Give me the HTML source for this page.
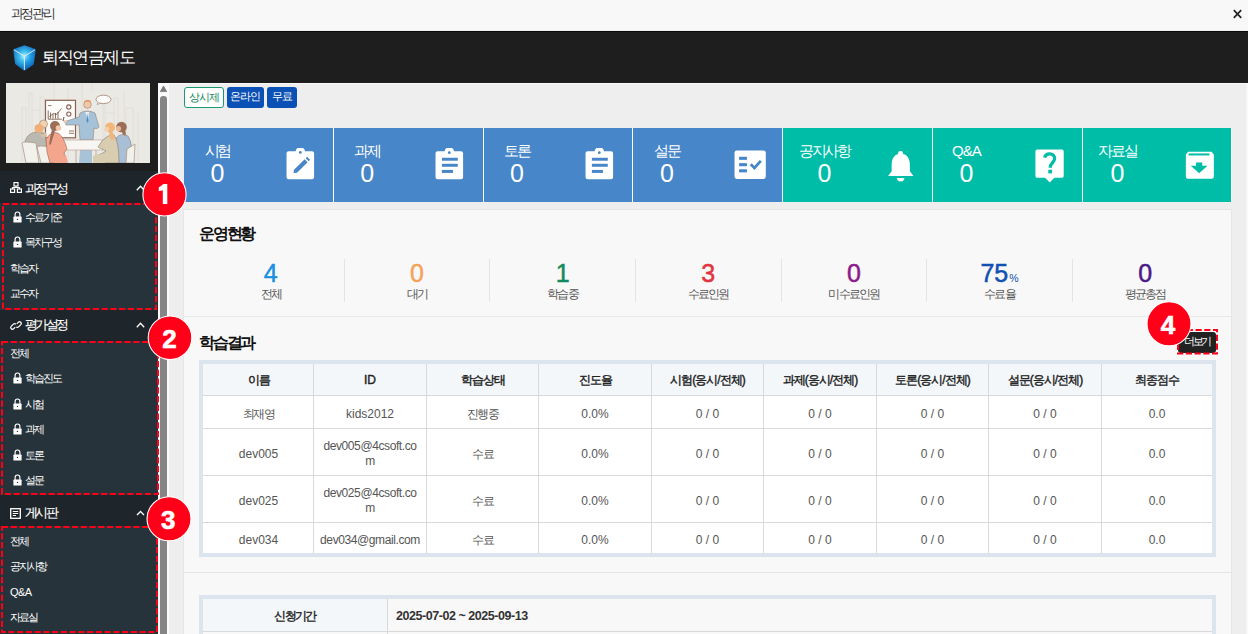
<!DOCTYPE html>
<html><head><meta charset="utf-8">
<style>
*{box-sizing:border-box;margin:0;padding:0}
html,body{width:1248px;height:634px;overflow:hidden}
body{position:relative;background:#eeeeee;font-family:"Liberation Sans",sans-serif;color:#333}
.a{position:absolute}
#title{left:0;top:0;width:1248px;height:30px;background:#f8f8f8}
#title .t{left:10.5px;top:0;font-size:13px;line-height:27px;color:#333;letter-spacing:-2.2px}
#header{left:0;top:31px;width:1248px;height:52px;background:#1e1e1e;border-top:1px solid #0a0a0a}
#imgwrap{left:0;top:83px;width:158px;height:88px;background:#1e1e1e}
#side{left:0;top:171px;width:158px;height:463px;background:#1f262b}
#sbar{left:158px;top:83px;width:11px;height:551px;background:#fbfbfb}
#main{left:169px;top:84px;width:1077px;height:550px;background:#eeeeee}
#rstrip{left:1246px;top:83px;width:2px;height:551px;background:#f8f8f8}
.badge{top:87px;height:21px;border-radius:3px;font-size:11px;line-height:19px;text-align:center;letter-spacing:-0.8px}
.card{top:128px;height:74px;color:#fff}
.card .lb{position:absolute;top:13px;font-size:15px;line-height:20px;text-align:center;min-width:36px;letter-spacing:-1px}
.card .nm{position:absolute;top:33px;font-size:24px;line-height:30px;text-align:center;width:100%}
.card svg{position:absolute}
#panel{left:183px;top:209px;width:1049px;height:440px;background:#f8f8f8;border:1px solid #e6e6e6}

.sh{position:absolute;left:0;width:158px;background:#1f262b;color:#fff}
.sh span{position:absolute;left:24.8px;top:1.5px;line-height:32px;font-size:13px;letter-spacing:-2.6px;-webkit-text-stroke:0.15px #fff}
.sh .ic{position:absolute;left:10px;top:11px}
.sh .ct{position:absolute;left:136px;top:13.5px}
.sm{position:absolute;left:0;width:158px;background:#27333a}
.it{position:absolute;left:10px;height:20px;width:140px;color:#fff}
.it span{position:absolute;left:0;top:0;line-height:20px;font-size:11px;letter-spacing:-2.1px;white-space:nowrap}
.it .lk{position:absolute;left:2.5px;top:4px}

.icw{transform:scale(1.06);transform-origin:50% 50%}
.cw{position:absolute;left:15.5px;top:0;min-width:36px;text-align:center}
.card .lb{position:relative;top:13px;font-size:15px;line-height:20px;letter-spacing:-2.1px;white-space:nowrap;min-width:0}
.card .nm{position:absolute;left:0;top:30px;font-size:25px;line-height:30px;width:100%;text-align:center}

.sec-t{font-size:16px;line-height:20px;font-weight:bold;color:#111;letter-spacing:-2.2px}
.st{top:259px;height:43px;text-align:center}
.sn{position:absolute;left:0;width:100%;top:0;font-size:25px;line-height:28px;-webkit-text-stroke:0.5px currentColor}
.sl{position:absolute;left:0;width:100%;top:27px;font-size:12px;line-height:17px;color:#555;letter-spacing:-1.8px}

.hl{left:203px;width:1009px;height:1px;background:#d9d9d9}
.vl{top:364px;width:1px;height:189px;background:#d9d9d9}
.th{display:flex;align-items:center;justify-content:center;padding-top:1.5px;font-size:12px;color:#222;-webkit-text-stroke:0.4px #222;letter-spacing:-1px;white-space:nowrap}
.td{display:flex;align-items:center;justify-content:center;font-size:12px;color:#555;text-align:center;line-height:15px;white-space:nowrap}
.td div{position:relative;top:2px}
.td .em{letter-spacing:-0.4px}
.td .k{letter-spacing:-1.5px}
</style></head><body>
<div id="title" class="a"><div class="t a">과정관리</div>
<svg class="a" style="left:1232px;top:9px" width="11" height="10" viewBox="0 0 11 10"><path d="M1.8,1.2 L9.2,8.8 M9.2,1.2 L1.8,8.8" stroke="#222" stroke-width="1.7"/></svg></div>
<div id="header" class="a">
<svg class="a" style="left:12px;top:12px" width="26" height="30" viewBox="0 0 26 30">
<defs>
<radialGradient id="cg" cx="12.4" cy="12.3" r="14" gradientUnits="userSpaceOnUse"><stop offset="0" stop-color="#b8f0ff"/><stop offset="0.35" stop-color="#3fc0f0"/><stop offset="1" stop-color="#0a5fb5"/></radialGradient>
<radialGradient id="cg2" cx="12.4" cy="12.3" r="15" gradientUnits="userSpaceOnUse"><stop offset="0" stop-color="#8ee4ff"/><stop offset="0.4" stop-color="#1fa0e6"/><stop offset="1" stop-color="#0850a5"/></radialGradient>
</defs>
<polygon points="12.5,1.2 23.9,5.3 12.4,12.3 1.1,5.3" fill="url(#cg)"/>
<polygon points="1.1,5.3 12.4,12.3 12.4,27 3.2,20" fill="url(#cg)"/>
<polygon points="23.9,5.3 12.4,12.3 12.4,27 21.7,20.6" fill="url(#cg2)"/>
<path d="M2,5.8 L12.4,12.3 L23,5.8 M12.4,12.3 V26" stroke="#ffffff" stroke-width="1" fill="none" opacity="0.85"/>
</svg>
<div class="a" style="left:41.5px;top:8.5px;font-size:17px;line-height:34px;color:#fff;letter-spacing:-1.6px">퇴직연금제도</div>
</div>
<div id="imgwrap" class="a"></div>
<svg class="a" style="left:6px;top:83px" width="144" height="80" viewBox="0 0 144 80">
<rect width="144" height="80" fill="#ebe9e4"/>
<g fill="none" stroke="#dedbd5" stroke-width="0.8">
<path d="M16,80 V24 H20 V80 M23,80 V10 H26 V80 M34,80 V14 H38 V80 M48,0 V17 M62,80 V5 M76,30 V0 M86,8 V0 M97,80 V12 H99 V80 M108,80 V15 H112 V80 M118,80 V8 M120,80 V25 H127 V80 M132,80 V30"/>
<path d="M26,27 H34 M99,30 H108"/>
</g>
<rect x="39.5" y="17.3" width="30" height="37.5" fill="#fdfcfa" stroke="#8a6252" stroke-width="1.2"/>
<path d="M42,22.6 H45.5 M63,48 H68 M63,50.3 H68" stroke="#8b6b5b" stroke-width="0.9"/>
<path d="M42.2,27.5 V36.2 H55.8 M44.5,35.5 V29.5 M47,35.5 V31 M49.5,35.5 V30 M52,35.5 V29 M43.5,33.5 L47.5,30.5 L50.5,31.5 L55.5,25.5" stroke="#6d4d3d" stroke-width="0.8" fill="none"/>
<circle cx="62.8" cy="24" r="2.1" fill="none" stroke="#8a6252" stroke-width="1.1"/>
<circle cx="62.8" cy="31.1" r="2.1" fill="none" stroke="#8a6252" stroke-width="1.1"/>
<ellipse cx="97.5" cy="16.4" rx="7.5" ry="4.2" fill="#fdfcfa" stroke="#a08070" stroke-width="0.8"/>
<path d="M92.5,19 L91,21.5 L95,20" fill="#fdfcfa" stroke="#a08070" stroke-width="0.6"/>
<!-- speaker -->
<path d="M73,80 L75,56 H86 L86,80 Z" fill="#a8c3d8"/>
<path d="M74,30 Q81,26 89,30 L93,44 Q91,47 88,45 L87,57 H74 L73,42 L60,42 L59,38.5 L73,34 Z" fill="#a6c2d9" stroke="#8a7060" stroke-width="0.5"/>
<path d="M79.5,29 L81.5,40 L83,29 Z" fill="#f4f2ee"/>
<path d="M81,30 L80.5,38 L81.8,40 L82.5,38 Z" fill="#3c8fc0"/>
<circle cx="81.5" cy="21.5" r="3.8" fill="#f2c9a8" stroke="#8a6a5a" stroke-width="0.5"/>
<path d="M77.8,20 Q78,16.8 81.5,16.8 Q85.2,16.8 85.2,20 Q83,18.5 81.5,19 Q79.5,18.3 77.8,20 Z" fill="#e2a070"/>
<circle cx="59" cy="38.6" r="1.6" fill="#f2c9a8"/>
<path d="M58,34 L57,38" stroke="#5a4030" stroke-width="0.9"/>
<!-- table -->
<path d="M55,57 H97 V67 H55 Z" fill="#f7f6f3" stroke="#b8a090" stroke-width="0.6"/>
<path d="M58,67 V80 M90,67 V80 M70,67 V80" stroke="#b8a090" stroke-width="0.8"/>
<!-- grey man -->
<circle cx="37.5" cy="41" r="4" fill="#f0d2b0" stroke="#8a6a5a" stroke-width="0.5"/>
<path d="M19,58 Q22,50 30,49 L38,50 Q41,54 40,66 L20,67 Z" fill="#b9b9b2" stroke="#7a6a60" stroke-width="0.5"/>
<circle cx="33" cy="45.5" r="4.6" fill="#eeaf78"/>
<path d="M34,52 Q38,52 40,49 L41,53 L37,55 Z" fill="#dfc0a0"/>
<!-- chairs -->
<path d="M16,60 Q17,58 30,60 L33,80 H20 Z" fill="#f3f1ec" stroke="#a89080" stroke-width="0.7"/>
<path d="M31,64 Q34,62 43,64 L46,80 H35 Z" fill="#f3f1ec" stroke="#a89080" stroke-width="0.7"/>
<!-- pink woman -->
<path d="M40,56 Q45,48 52,50 Q58,54 61,66 L58,70 L60,80 H44 Q40,70 40,56 Z" fill="#f3a68c" stroke="#8a5a4a" stroke-width="0.5"/>
<path d="M48,80 Q50,72 60,72 L62,80 Z" fill="#f3a68c"/>
<circle cx="49" cy="43" r="5" fill="#9b6e58"/>
<path d="M46,46 Q44,54 43,62 L45,61 Q47,54 49,48 Z" fill="#9b6e58"/>
<circle cx="52.5" cy="45" r="2.8" fill="#f2c9a8"/>
<!-- blue woman -->
<path d="M110,55 Q116,49 122,53 Q127,60 126,80 H112 Q108,68 110,55 Z" fill="#a9bfd6" stroke="#7a6a60" stroke-width="0.5"/>
<circle cx="115.5" cy="44" r="5.3" fill="#9b6e58"/>
<path d="M118,45 Q121,50 119,53 L116,50 Z" fill="#9b6e58"/>
<circle cx="112.5" cy="45.5" r="2.6" fill="#e8b898"/>
<!-- chair right -->
<path d="M121,66 L129,61 L128,80 H120 Z" fill="#f3f1ec" stroke="#a89080" stroke-width="0.7"/>
<!-- beige woman -->
<path d="M92,64 Q96,56 102,53 L108,52 Q113,58 113,80 H94 L92,72 Q98,70 100,68 Z" fill="#d8cdb0" stroke="#7a6a60" stroke-width="0.5"/>
<path d="M87,73 Q90,71 97,71 L99,80 H87 Z" fill="#d8cdb0"/>
<circle cx="104" cy="44.5" r="5" fill="#f3b67a"/>
<path d="M104,46 Q109,50 108,57 L105,57 L103,50 Z" fill="#f3b67a"/>
<circle cx="100.8" cy="46.2" r="2.4" fill="#f2d0b0"/>
</svg>
<div id="side" class="a">
<div class="sh" style="top:0px;height:32px"><svg class="ic" width="12" height="11" viewBox="0 0 12 11"><rect x="4" y="0.6" width="4" height="3.4" fill="none" stroke="#fff" stroke-width="1.2"/><rect x="0.6" y="7" width="4" height="3.4" fill="none" stroke="#fff" stroke-width="1.2"/><rect x="7.4" y="7" width="4" height="3.4" fill="none" stroke="#fff" stroke-width="1.2"/><path d="M6,4 V5.5 M2.6,7 V5.5 H9.4 V7" stroke="#fff" stroke-width="1.1" fill="none"/></svg><span>과정구성</span><svg class="ct" width="9" height="6" viewBox="0 0 9 6"><path d="M0.8,5.2 L4.5,1.2 L8.2,5.2" stroke="#fff" stroke-width="1.3" fill="none"/></svg></div>
<div class="sm" style="top:32px;height:107px">
</div>
<div class="sh" style="top:139px;height:31px"><svg class="ic" style="top:9.5px" width="12" height="11" viewBox="0 0 12 11"><path d="M5.2,7.2 L3.6,8.8 A1.7,1.7 0 0 1 1.2,6.4 L3.4,4.2 A1.7,1.7 0 0 1 5.8,4.2 M6.8,3.8 L8.4,2.2 A1.7,1.7 0 0 1 10.8,4.6 L8.6,6.8 A1.7,1.7 0 0 1 6.2,6.8" stroke="#fff" stroke-width="1.2" fill="none"/></svg><span style="top:-1px">평가설정</span><svg class="ct" style="top:11.5px" width="9" height="6" viewBox="0 0 9 6"><path d="M0.8,5.2 L4.5,1.2 L8.2,5.2" stroke="#fff" stroke-width="1.3" fill="none"/></svg></div>
<div class="sm" style="top:170px;height:154px"></div>
<div class="sh" style="top:324px;height:31px"><svg class="ic" style="top:12.5px" width="11" height="11" viewBox="0 0 11 11"><rect x="0.7" y="0.7" width="9.6" height="9.6" fill="none" stroke="#fff" stroke-width="1.3"/><path d="M2.8,3.5 H8.2 M2.8,5.5 H8.2 M2.8,7.5 H6" stroke="#fff" stroke-width="1.1"/></svg><span style="top:2px">게시판</span><svg class="ct" style="top:15px" width="9" height="6" viewBox="0 0 9 6"><path d="M1,5 L4.5,1.5 L8,5" stroke="#fff" stroke-width="1.3" fill="none"/></svg></div>
<div class="sm" style="top:355px;height:108px"></div>
<div class="it" style="top:35.7px"><svg class="lk" width="9" height="12" viewBox="0 0 9 12"><path d="M2.1,6 V3.4 A2.4,2.4 0 0 1 6.9,3.4 V6" stroke="#fff" stroke-width="1.15" fill="none"/><rect x="0.4" y="5.6" width="8.2" height="6" rx="0.7" fill="#fff"/><circle cx="4.5" cy="8.4" r="0.7" fill="#27333a"/></svg><span style="left:15px">수료기준</span></div>
<div class="it" style="top:61.1px"><svg class="lk" width="9" height="12" viewBox="0 0 9 12"><path d="M2.1,6 V3.4 A2.4,2.4 0 0 1 6.9,3.4 V6" stroke="#fff" stroke-width="1.15" fill="none"/><rect x="0.4" y="5.6" width="8.2" height="6" rx="0.7" fill="#fff"/><circle cx="4.5" cy="8.4" r="0.7" fill="#27333a"/></svg><span style="left:15px">목차구성</span></div>
<div class="it" style="top:86.6px"><span>학습자</span></div>
<div class="it" style="top:112.0px"><span>교수자</span></div>
<div class="it" style="top:171.8px"><span>전체</span></div>
<div class="it" style="top:197.2px"><svg class="lk" width="9" height="12" viewBox="0 0 9 12"><path d="M2.1,6 V3.4 A2.4,2.4 0 0 1 6.9,3.4 V6" stroke="#fff" stroke-width="1.15" fill="none"/><rect x="0.4" y="5.6" width="8.2" height="6" rx="0.7" fill="#fff"/><circle cx="4.5" cy="8.4" r="0.7" fill="#27333a"/></svg><span style="left:15px">학습진도</span></div>
<div class="it" style="top:222.7px"><svg class="lk" width="9" height="12" viewBox="0 0 9 12"><path d="M2.1,6 V3.4 A2.4,2.4 0 0 1 6.9,3.4 V6" stroke="#fff" stroke-width="1.15" fill="none"/><rect x="0.4" y="5.6" width="8.2" height="6" rx="0.7" fill="#fff"/><circle cx="4.5" cy="8.4" r="0.7" fill="#27333a"/></svg><span style="left:15px">시험</span></div>
<div class="it" style="top:248.1px"><svg class="lk" width="9" height="12" viewBox="0 0 9 12"><path d="M2.1,6 V3.4 A2.4,2.4 0 0 1 6.9,3.4 V6" stroke="#fff" stroke-width="1.15" fill="none"/><rect x="0.4" y="5.6" width="8.2" height="6" rx="0.7" fill="#fff"/><circle cx="4.5" cy="8.4" r="0.7" fill="#27333a"/></svg><span style="left:15px">과제</span></div>
<div class="it" style="top:273.6px"><svg class="lk" width="9" height="12" viewBox="0 0 9 12"><path d="M2.1,6 V3.4 A2.4,2.4 0 0 1 6.9,3.4 V6" stroke="#fff" stroke-width="1.15" fill="none"/><rect x="0.4" y="5.6" width="8.2" height="6" rx="0.7" fill="#fff"/><circle cx="4.5" cy="8.4" r="0.7" fill="#27333a"/></svg><span style="left:15px">토론</span></div>
<div class="it" style="top:299.1px"><svg class="lk" width="9" height="12" viewBox="0 0 9 12"><path d="M2.1,6 V3.4 A2.4,2.4 0 0 1 6.9,3.4 V6" stroke="#fff" stroke-width="1.15" fill="none"/><rect x="0.4" y="5.6" width="8.2" height="6" rx="0.7" fill="#fff"/><circle cx="4.5" cy="8.4" r="0.7" fill="#27333a"/></svg><span style="left:15px">설문</span></div>
<div class="it" style="top:359.6px"><span>전체</span></div>
<div class="it" style="top:385.1px"><span>공지사항</span></div>
<div class="it" style="top:410.5px"><span style="letter-spacing:-0.6px">Q&amp;A</span></div>
<div class="it" style="top:436.0px"><span>자료실</span></div>
</div>
<div id="sbar" class="a">
<svg class="a" style="left:0;top:0" width="11" height="14" viewBox="0 0 11 14"><path d="M2.3,8.6 L5.5,3 L8.7,8.6 Z" fill="#7a7a7a" stroke="#7a7a7a" stroke-width="0.8" stroke-linejoin="round"/></svg>
<div class="a" style="left:2px;top:13px;width:6.5px;height:560px;background:#858585;border-radius:3.2px 3.2px 0 0"></div>
</div>
<div id="main" class="a"></div>
<div id="rstrip" class="a"></div>
<div class="a" style="left:158px;top:83px;width:1090px;height:1px;background:#fafafa"></div>
<div class="badge a" style="left:184px;width:40px;background:#fff;border:1px solid #1a9a6e;color:#11875c">상시제</div>
<div class="badge a" style="left:226.5px;width:37.5px;background:#0b50b4;color:#fff">온라인</div>
<div class="badge a" style="left:267px;width:30px;background:#0b50b4;color:#fff">무료</div>
<div class="a" style="left:184px;top:128px;width:1047.5px;height:74px;background:#fff"></div>
<div class="card a" style="left:184.00px;width:148.79px;background:#4786c9"><div class="cw"><div class="lb">시험</div><div class="nm">0</div></div><div class="icw" style="position:absolute;left:102.0px;top:19.5px"><svg width="28" height="31" viewBox="0 0 28 31"><path d="M2.5,3 H9 A4.6,4.6 0 0 1 18,3 H24.5 A2,2 0 0 1 26.5,5 V27.5 A2,2 0 0 1 24.5,29.5 H2.5 A2,2 0 0 1 0.5,27.5 V5 A2,2 0 0 1 2.5,3 Z" fill="#fff"/><circle cx="13.5" cy="4.2" r="1.3" fill="#4786c9"/><path d="M7,23.5 L7.6,20.6 L17.6,10.6 L20.4,13.4 L10.4,23.4 Z" fill="#4786c9"/><path d="M18.6,9.6 L19.9,8.3 L22.7,11.1 L21.4,12.4 Z" fill="#4786c9"/></svg></div></div>
<div class="card a" style="left:333.79px;width:148.79px;background:#4786c9"><div class="cw"><div class="lb">과제</div><div class="nm">0</div></div><div class="icw" style="position:absolute;left:101.5px;top:19.5px"><svg width="28" height="31" viewBox="0 0 28 31"><path d="M2.5,3 H9 A4.6,4.6 0 0 1 18,3 H24.5 A2,2 0 0 1 26.5,5 V27.5 A2,2 0 0 1 24.5,29.5 H2.5 A2,2 0 0 1 0.5,27.5 V5 A2,2 0 0 1 2.5,3 Z" fill="#fff"/><circle cx="13.5" cy="4.4" r="1.3" fill="#4786c9"/><rect x="6.5" y="9.2" width="15" height="2.8" fill="#4786c9"/><rect x="6.5" y="14.9" width="15" height="2.8" fill="#4786c9"/><rect x="6.5" y="20.7" width="10.5" height="2.8" fill="#4786c9"/></svg></div></div>
<div class="card a" style="left:483.57px;width:148.79px;background:#4786c9"><div class="cw"><div class="lb">토론</div><div class="nm">0</div></div><div class="icw" style="position:absolute;left:101.5px;top:19.5px"><svg width="28" height="31" viewBox="0 0 28 31"><path d="M2.5,3 H9 A4.6,4.6 0 0 1 18,3 H24.5 A2,2 0 0 1 26.5,5 V27.5 A2,2 0 0 1 24.5,29.5 H2.5 A2,2 0 0 1 0.5,27.5 V5 A2,2 0 0 1 2.5,3 Z" fill="#fff"/><circle cx="13.5" cy="4.4" r="1.3" fill="#4786c9"/><rect x="6.5" y="9.2" width="15" height="2.8" fill="#4786c9"/><rect x="6.5" y="14.9" width="15" height="2.8" fill="#4786c9"/><rect x="6.5" y="20.7" width="10.5" height="2.8" fill="#4786c9"/></svg></div></div>
<div class="card a" style="left:633.36px;width:148.79px;background:#4786c9"><div class="cw"><div class="lb">설문</div><div class="nm">0</div></div><div class="icw" style="position:absolute;left:101.0px;top:21.5px"><svg width="31" height="28" viewBox="0 0 31 28"><rect x="0.5" y="0.5" width="29.5" height="26.8" rx="2.2" fill="#fff"/><rect x="4.8" y="6.4" width="7.4" height="2.9" fill="#4786c9"/><rect x="4.8" y="12.4" width="7.4" height="2.9" fill="#4786c9"/><rect x="4.8" y="18.2" width="7.4" height="2.9" fill="#4786c9"/><path d="M15.8,13.4 L19.3,17 L25.3,10.2" stroke="#4786c9" stroke-width="2.6" fill="none"/></svg></div></div>
<div class="card a" style="left:783.14px;width:148.79px;background:#00bda8"><div class="cw"><div class="lb">공지사항</div><div class="nm">0</div></div><div class="icw" style="position:absolute;left:104.0px;top:21.5px"><svg width="26" height="31" viewBox="0 0 26 31"><rect x="10.5" y="1" width="4.6" height="4" rx="2" fill="#fff"/><path d="M13,3.5 C19,3.5 21.6,8 21.6,14 V20 L25,24.5 H1 L4.4,20 V14 C4.4,8 7,3.5 13,3.5 Z" fill="#fff"/><path d="M9.4,26.4 H16.4 A3.5,3.2 0 0 1 9.4,26.4 Z" fill="#fff"/></svg></div></div>
<div class="card a" style="left:932.93px;width:148.79px;background:#00bda8"><div class="cw"><div class="lb" style="letter-spacing:-0.9px">Q&amp;A</div><div class="nm">0</div></div><div class="icw" style="position:absolute;left:102.5px;top:21.0px"><svg width="28" height="32" viewBox="0 0 28 32"><path d="M2.2,0.5 H25.3 A1.8,1.8 0 0 1 27.1,2.3 V25.4 A1.8,1.8 0 0 1 25.3,27.2 H18.3 L13.9,31.6 L9.5,27.2 H2.2 A1.8,1.8 0 0 1 0.4,25.4 V2.3 A1.8,1.8 0 0 1 2.2,0.5 Z" fill="#fff"/><path d="M9,8.2 A4.9,4.9 0 0 1 18.6,8.8 C18.6,12.6 14.3,13.2 14.3,17.6" stroke="#00bda8" stroke-width="3" fill="none"/><rect x="12.5" y="19.6" width="3.6" height="3.4" fill="#00bda8"/></svg></div></div>
<div class="card a" style="left:1082.71px;width:148.79px;background:#00bda8"><div class="cw"><div class="lb">자료실</div><div class="nm">0</div></div><div class="icw" style="position:absolute;left:102.5px;top:22.5px"><svg width="28" height="28" viewBox="0 0 28 28"><path d="M3,0.6 H25 L27.2,3.4 V24.2 A1.9,1.9 0 0 1 25.3,26.1 H2.7 A1.9,1.9 0 0 1 0.8,24.2 V3.4 Z" fill="#fff"/><rect x="3.4" y="2.3" width="19.6" height="1.9" fill="#00bda8"/><path d="M10.4,10.8 H16.3 V13.8 H21.3 L13.35,21 L5.4,13.8 H10.4 Z" fill="#00bda8"/></svg></div></div>
<div id="panel" class="a"></div>
<div class="a" style="left:199px;top:360px;width:1017px;height:197px;border:4px solid #dce5ee;background:#fff"></div>
<div class="a" style="left:203px;top:364px;width:1009px;height:31px;background:#f3f7fa"></div>
<div class="a hl" style="top:395px"></div>
<div class="a hl" style="top:428px"></div>
<div class="a hl" style="top:475px"></div>
<div class="a hl" style="top:522px"></div>
<div class="a vl" style="left:313px"></div>
<div class="a vl" style="left:426px"></div>
<div class="a vl" style="left:538px"></div>
<div class="a vl" style="left:651px"></div>
<div class="a vl" style="left:763px"></div>
<div class="a vl" style="left:876px"></div>
<div class="a vl" style="left:988px"></div>
<div class="a vl" style="left:1101px"></div>
<div class="a th" style="left:204px;width:109px;top:364px;height:31px">이름</div>
<div class="a th" style="left:314px;width:112px;top:364px;height:31px;letter-spacing:0">ID</div>
<div class="a th" style="left:427px;width:111px;top:364px;height:31px">학습상태</div>
<div class="a th" style="left:539px;width:112px;top:364px;height:31px">진도율</div>
<div class="a th" style="left:652px;width:111px;top:364px;height:31px">시험(응시/전체)</div>
<div class="a th" style="left:764px;width:112px;top:364px;height:31px">과제(응시/전체)</div>
<div class="a th" style="left:877px;width:111px;top:364px;height:31px">토론(응시/전체)</div>
<div class="a th" style="left:989px;width:112px;top:364px;height:31px">설문(응시/전체)</div>
<div class="a th" style="left:1102px;width:110px;top:364px;height:31px">최종점수</div>
<div class="a td" style="left:204px;width:109px;top:396px;height:32px"><div class="k">최재영</div></div>
<div class="a td" style="left:314px;width:112px;top:396px;height:32px"><div>kids2012</div></div>
<div class="a td" style="left:427px;width:111px;top:396px;height:32px"><div class="k">진행중</div></div>
<div class="a td" style="left:539px;width:112px;top:396px;height:32px"><div>0.0%</div></div>
<div class="a td" style="left:652px;width:111px;top:396px;height:32px"><div>0 / 0</div></div>
<div class="a td" style="left:764px;width:112px;top:396px;height:32px"><div>0 / 0</div></div>
<div class="a td" style="left:877px;width:111px;top:396px;height:32px"><div>0 / 0</div></div>
<div class="a td" style="left:989px;width:112px;top:396px;height:32px"><div>0 / 0</div></div>
<div class="a td" style="left:1102px;width:110px;top:396px;height:32px"><div>0.0</div></div>
<div class="a td" style="left:204px;width:109px;top:429px;height:46px"><div>dev005</div></div>
<div class="a td" style="left:314px;width:112px;top:429px;height:46px"><div class="em">dev005@4csoft.co<br>m</div></div>
<div class="a td" style="left:427px;width:111px;top:429px;height:46px"><div class="k">수료</div></div>
<div class="a td" style="left:539px;width:112px;top:429px;height:46px"><div>0.0%</div></div>
<div class="a td" style="left:652px;width:111px;top:429px;height:46px"><div>0 / 0</div></div>
<div class="a td" style="left:764px;width:112px;top:429px;height:46px"><div>0 / 0</div></div>
<div class="a td" style="left:877px;width:111px;top:429px;height:46px"><div>0 / 0</div></div>
<div class="a td" style="left:989px;width:112px;top:429px;height:46px"><div>0 / 0</div></div>
<div class="a td" style="left:1102px;width:110px;top:429px;height:46px"><div>0.0</div></div>
<div class="a td" style="left:204px;width:109px;top:476px;height:46px"><div>dev025</div></div>
<div class="a td" style="left:314px;width:112px;top:476px;height:46px"><div class="em">dev025@4csoft.co<br>m</div></div>
<div class="a td" style="left:427px;width:111px;top:476px;height:46px"><div class="k">수료</div></div>
<div class="a td" style="left:539px;width:112px;top:476px;height:46px"><div>0.0%</div></div>
<div class="a td" style="left:652px;width:111px;top:476px;height:46px"><div>0 / 0</div></div>
<div class="a td" style="left:764px;width:112px;top:476px;height:46px"><div>0 / 0</div></div>
<div class="a td" style="left:877px;width:111px;top:476px;height:46px"><div>0 / 0</div></div>
<div class="a td" style="left:989px;width:112px;top:476px;height:46px"><div>0 / 0</div></div>
<div class="a td" style="left:1102px;width:110px;top:476px;height:46px"><div>0.0</div></div>
<div class="a td" style="left:204px;width:109px;top:523px;height:30px"><div>dev034</div></div>
<div class="a td" style="left:314px;width:112px;top:523px;height:30px"><div class="em">dev034@gmail.com</div></div>
<div class="a td" style="left:427px;width:111px;top:523px;height:30px"><div class="k">수료</div></div>
<div class="a td" style="left:539px;width:112px;top:523px;height:30px"><div>0.0%</div></div>
<div class="a td" style="left:652px;width:111px;top:523px;height:30px"><div>0 / 0</div></div>
<div class="a td" style="left:764px;width:112px;top:523px;height:30px"><div>0 / 0</div></div>
<div class="a td" style="left:877px;width:111px;top:523px;height:30px"><div>0 / 0</div></div>
<div class="a td" style="left:989px;width:112px;top:523px;height:30px"><div>0 / 0</div></div>
<div class="a td" style="left:1102px;width:110px;top:523px;height:30px"><div>0.0</div></div>
<div class="a" style="left:184px;top:572px;width:1047px;height:1px;background:#e4e4e4"></div>
<div class="a" style="left:199px;top:595px;width:1017px;height:60px;border:4px solid #dce5ee;border-bottom:none;background:#f8f8f8"></div>
<div class="a" style="left:203px;top:599px;width:184px;height:32px;background:#f3f7fa"></div>
<div class="a" style="left:387px;top:599px;width:1px;height:40px;background:#d9d9d9"></div>
<div class="a" style="left:203px;top:631px;width:1009px;height:1px;background:#d9d9d9"></div>
<div class="a th" style="left:203px;top:600px;width:184px;height:32px;letter-spacing:-1.7px">신청기간</div>
<div class="a" style="left:396px;top:600px;height:32px;line-height:32px;font-size:12.5px;font-weight:bold;color:#333;letter-spacing:-0.45px">2025-07-02 ~ 2025-09-13</div>
<div class="a sec-t" style="left:199px;top:224px">운영현황</div>
<div class="st a" style="left:198.00px;width:145.64px;"><div class="sn" style="color:#1a90de">4</div><div class="sl">전체</div></div>
<div class="st a" style="left:343.64px;width:145.64px;border-left:1px solid #e4e4e4;"><div class="sn" style="color:#f5a35c">0</div><div class="sl">대기</div></div>
<div class="st a" style="left:489.29px;width:145.64px;border-left:1px solid #e4e4e4;"><div class="sn" style="color:#138a5e">1</div><div class="sl">학습중</div></div>
<div class="st a" style="left:634.93px;width:145.64px;border-left:1px solid #e4e4e4;"><div class="sn" style="color:#e0353f">3</div><div class="sl">수료인원</div></div>
<div class="st a" style="left:780.57px;width:145.64px;border-left:1px solid #e4e4e4;"><div class="sn" style="color:#8d1a8a">0</div><div class="sl">미수료인원</div></div>
<div class="st a" style="left:926.21px;width:145.64px;border-left:1px solid #e4e4e4;"><div class="sn" style="color:#1050b0">75<span style="font-size:10.5px;-webkit-text-stroke:0;margin-left:1px;position:relative;top:0px">%</span></div><div class="sl">수료율</div></div>
<div class="st a" style="left:1071.86px;width:145.64px;border-left:1px solid #e4e4e4;"><div class="sn" style="color:#4a1a8a">0</div><div class="sl">평균총점</div></div>
<div class="a" style="left:184px;top:316px;width:1047px;height:1px;background:#e8e8e8"></div>
<div class="a sec-t" style="left:199px;top:333px">학습결과</div>
<div class="a" style="left:1178px;top:332px;width:38px;height:20.5px;background:#222;border-radius:3px;color:#fff;font-size:11px;line-height:19.5px;text-align:center;letter-spacing:-2.1px">더보기</div>
<svg class="a" style="left:0;top:0;pointer-events:none" width="1248" height="634" viewBox="0 0 1248 634">
<g fill="none" stroke="#ff0018" stroke-width="2" stroke-dasharray="6.2 2.55">
<rect x="3" y="204" width="153" height="105"/>
<rect x="2" y="342" width="156" height="152"/>
<rect x="2" y="527" width="155" height="105"/>
<rect x="1178" y="330" width="39" height="23.5"/>
</g>
<g fill="#ff0018" stroke="#fff" stroke-width="1.1">
<circle cx="164.5" cy="194.4" r="21.6"/>
<circle cx="170" cy="337.8" r="21.8"/>
<circle cx="169" cy="518.8" r="22"/>
<circle cx="1169" cy="323.8" r="22"/>
</g>
<path d="M158.8,187.2 Q161.8,186.2 163.2,184.1 H167.3 V204 H162.8 V190.2 Q161,190.9 158.8,191.1 Z" fill="#fff"/>
<g fill="#fff" stroke="#fff" stroke-width="0.6" style="font-family:'Liberation Sans',sans-serif;font-weight:bold;font-size:26px" text-anchor="middle">
<text x="169.5" y="347.6">2</text>
<text x="168.2" y="528.7">3</text>
<text x="1168" y="333.5">4</text>
</g>
</svg>
</body></html>
